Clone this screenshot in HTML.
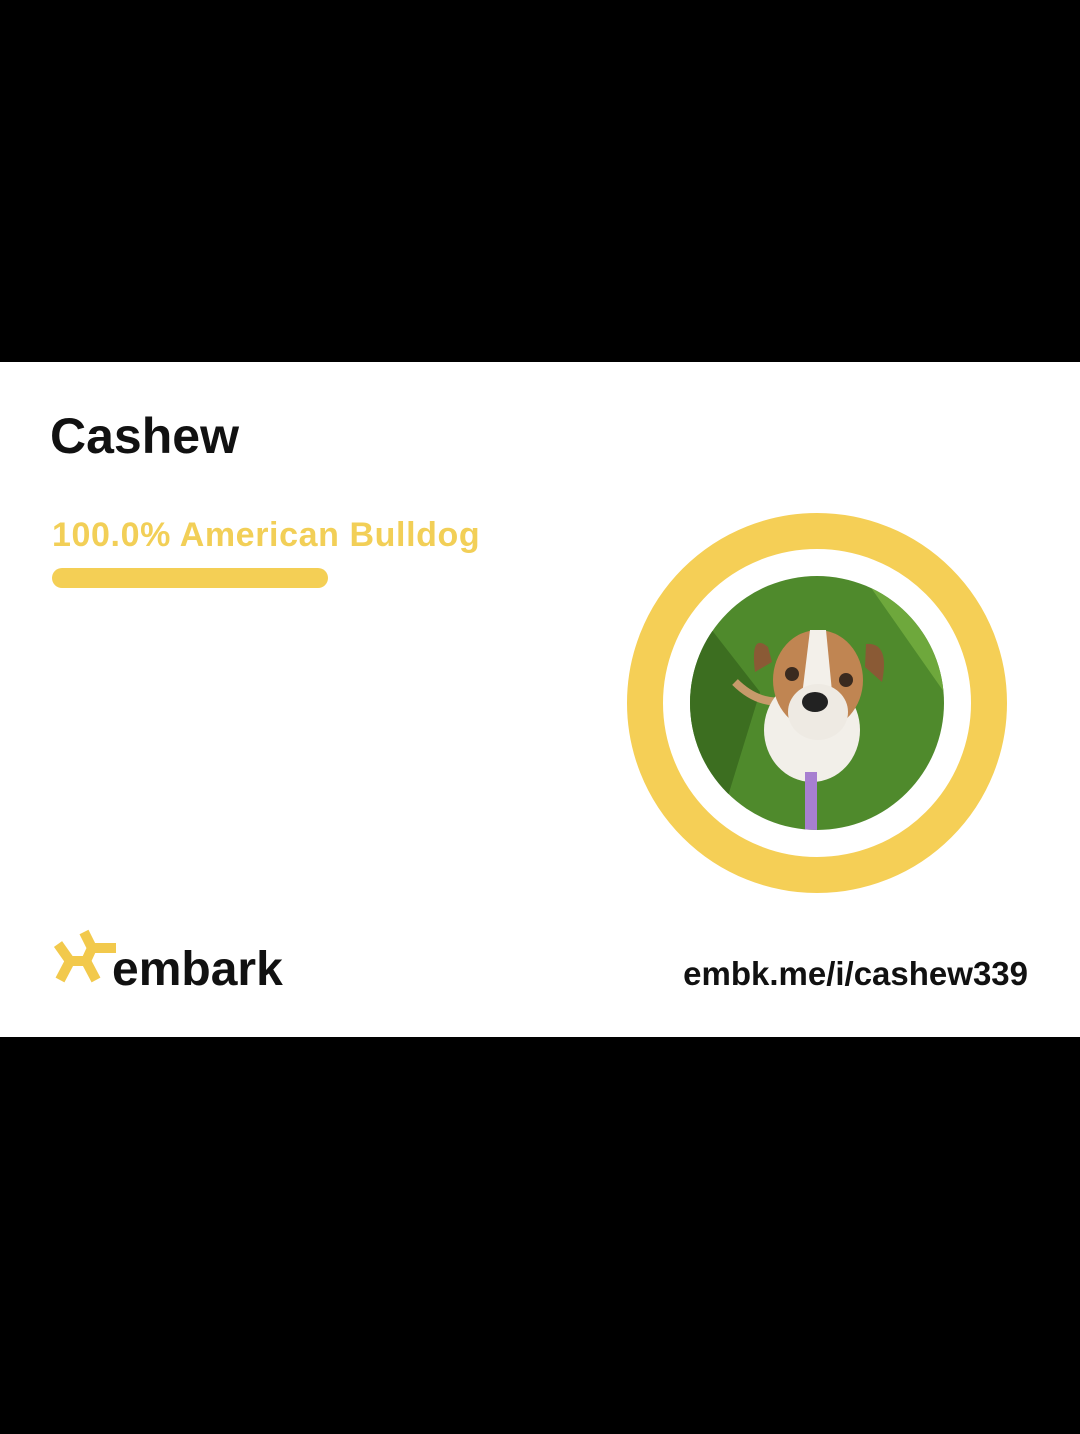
<!DOCTYPE html>
<html><head><style>
body{margin:0;width:1080px;height:1434px;background:#000;position:relative;font-family:"Liberation Sans",sans-serif;overflow:hidden}
.card{position:absolute;left:0;top:362px;width:1080px;height:675px;background:#fff}
.t{position:absolute;white-space:nowrap;font-weight:bold}
</style></head><body>
<div class="card">
<div class="t" style="left:50px;top:45px;font-size:50px;color:#111">Cashew</div>
<div class="t" style="left:52px;top:154px;font-size:34px;color:#f2cf57;letter-spacing:0.6px">100.0% American Bulldog</div>
<div style="position:absolute;left:52px;top:206px;width:276px;height:20px;border-radius:10px;background:#f4cf55"></div>
<svg style="position:absolute;left:0;top:0" width="1080" height="675">
<circle cx="817" cy="341" r="172" fill="none" stroke="#f5cf56" stroke-width="36"/>
<clipPath id="c"><circle cx="817" cy="341" r="127"/></clipPath>
<g clip-path="url(#c)">
<rect x="680" y="200" width="280" height="280" fill="#4f8a2c"/>
<path d="M690 240 L760 330 L720 460 L690 460Z" fill="#3c6e20"/>
<path d="M860 210 L944 250 L944 330Z" fill="#6ea83c"/>
<path d="M735 320 Q760 345 790 338" stroke="#c79a6a" stroke-width="8" fill="none"/>
<ellipse cx="812" cy="368" rx="48" ry="52" fill="#f2efe9"/>
<ellipse cx="818" cy="318" rx="45" ry="50" fill="#c08552"/>
<path d="M768 285 Q750 270 755 310 L772 300Z" fill="#8a5a35"/>
<path d="M866 282 Q890 280 882 320 L865 305Z" fill="#8a5a35"/>
<path d="M810 268 L826 268 L834 350 L800 350Z" fill="#f3f0ea"/>
<ellipse cx="818" cy="350" rx="30" ry="28" fill="#eeeae3"/>
<ellipse cx="815" cy="340" rx="13" ry="10" fill="#222"/>
<circle cx="792" cy="312" r="7" fill="#3a2a1f"/><circle cx="846" cy="318" r="7" fill="#3a2a1f"/>
<rect x="805" y="410" width="12" height="60" fill="#a77fd0"/>
</g>
</svg>
<svg style="position:absolute;left:54px;top:566px" width="66" height="60" viewBox="0 0 66 60">
<g stroke="#f2c94c" stroke-width="10" stroke-linecap="butt" stroke-linejoin="round" fill="none">
<path d="M4 16 L16 33 L6 52"/><path d="M16 33 L32 33"/><path d="M32 33 L42 52"/><path d="M32 33 L38 20 L30 4"/><path d="M38 20 L62 20"/>
</g></svg>
<div class="t" style="left:112px;top:580px;font-size:48px;color:#111">embark</div>
<div class="t" style="right:52px;top:593px;font-size:33px;color:#111">embk.me/i/cashew339</div>
</div>
</body></html>
